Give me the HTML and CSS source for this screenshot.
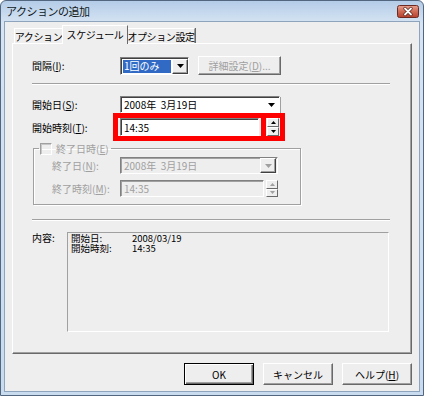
FILE: index.html
```html
<!DOCTYPE html>
<html lang="ja">
<head>
    <meta charset="UTF-8">
    <title>アクションの追加</title>
    <link rel="stylesheet" href="styles.css">
</head>
<body>
<div class="window">
    <div class="titlebar">
        <span class="title">アクションの追加</span>
        <span class="close">
            <svg width="22" height="13" viewBox="0 0 22 13">
                <defs>
                    <linearGradient id="cg" x1="0" y1="0" x2="0" y2="1">
                        <stop offset="0" stop-color="#e8a191"/>
                        <stop offset="0.5" stop-color="#cf6a55"/>
                        <stop offset="1" stop-color="#b5402c"/>
                    </linearGradient>
                </defs>
                <rect x="0.5" y="0.5" width="21" height="12" rx="2" fill="url(#cg)" stroke="#6e2a20"/>
                <path d="M8 3.5 L14 9.5 M14 3.5 L8 9.5" stroke="#5a2018" stroke-width="3.2" stroke-linecap="round"/>
                <path d="M8 3.5 L14 9.5 M14 3.5 L8 9.5" stroke="#fff" stroke-width="1.8" stroke-linecap="round"/>
            </svg>
        </span>
    </div>

    <div class="client">
        <div class="tabs">
            <span class="tab tab-action">アクション</span>
            <span class="tab tab-schedule active">スケジュール</span>
            <span class="tab tab-option">オプション設定</span>
        </div>

        <div class="panel">
            <div class="row row-interval">
                <span class="label">間隔(<u>I</u>):</span>
                <span class="select">
                    <span class="sel-text">1回のみ</span>
                    <span class="drop-btn">
                        <svg width="7" height="4" viewBox="0 0 7 4"><polygon points="0,0 7,0 3.5,4" fill="#000"/></svg>
                    </span>
                </span>
                <span class="btn btn-detail">詳細設定(<u>D</u>)...</span>
            </div>

            <div class="sep sep-top"></div>

            <div class="row row-start">
                <span class="label">開始日(<u>S</u>):</span>
                <span class="datepick">
                    <span class="dp-text">2008年&nbsp; 3月19日</span>
                    <span class="dp-arrow">
                        <svg width="7" height="4" viewBox="0 0 7 4"><polygon points="0,0 7,0 3.5,4" fill="#000"/></svg>
                    </span>
                </span>
            </div>

            <div class="row row-time">
                <span class="label">開始時刻(<u>T</u>):</span>
                <span class="timebox">14:35</span>
                <span class="spinner">
                    <span class="spin-btn">
                        <svg width="5" height="3" viewBox="0 0 5 3"><polygon points="0,3 5,3 2.5,0" fill="#000"/></svg>
                    </span>
                    <span class="spin-btn">
                        <svg width="5" height="3" viewBox="0 0 5 3"><polygon points="0,0 5,0 2.5,3" fill="#000"/></svg>
                    </span>
                </span>
                <span class="mark"><span class="mark-divider"></span></span>
            </div>

            <fieldset class="group">
                <legend class="group-legend">
                    <span class="checkbox"></span>
                    <span class="legend-text">終了日時(<u>E</u>)</span>
                </legend>
                <div class="row row-inner row-end-date">
                    <span class="label label-inner">終了日(<u>N</u>):</span>
                    <span class="datepick disabled">
                        <span class="dp-text">2008年&nbsp; 3月19日</span>
                        <span class="drop-btn">
                            <svg width="7" height="4" viewBox="0 0 7 4"><polygon points="0,0 7,0 3.5,4" fill="#a0a0a0"/></svg>
                        </span>
                    </span>
                </div>
                <div class="row row-inner row-end-time">
                    <span class="label label-inner">終了時刻(<u>M</u>):</span>
                    <span class="timebox disabled">14:35</span>
                    <span class="spinner spinner-off">
                        <span class="spin-btn">
                            <svg width="5" height="3" viewBox="0 0 5 3"><polygon points="0,3 5,3 2.5,0" fill="#a0a0a0"/></svg>
                        </span>
                        <span class="spin-btn">
                            <svg width="5" height="3" viewBox="0 0 5 3"><polygon points="0,0 5,0 2.5,3" fill="#a0a0a0"/></svg>
                        </span>
                    </span>
                </div>
            </fieldset>

            <div class="sep sep-bottom"></div>

            <div class="content-row">
                <span class="content-label">内容:</span>
                <div class="content-box">
                    <span class="c-key">開始日:</span><span class="c-val">2008/03/19</span>
                    <span class="c-key">開始時刻:</span><span class="c-val">14:35</span>
                </div>
            </div>
        </div>

        <div class="buttons">
            <span class="btn btn-main btn-default">OK</span>
            <span class="btn btn-main">キャンセル</span>
            <span class="btn btn-main">ヘルプ(<u>H</u>)</span>
        </div>
    </div>
</div>
</body>
</html>
```

FILE: styles.css
```css
* {
    box-sizing: border-box;
    margin: 0;
    padding: 0;
}

body {
    width: 424px;
    height: 396px;
    font-family: "Noto Sans CJK JP", sans-serif;
    font-size: 10px;
    color: #000;
    background: #ffffff;
    overflow: hidden;
}

u {
    text-decoration: underline;
    text-underline-offset: 1px;
}

.window {
    width: 424px;
    height: 396px;
    display: flex;
    flex-direction: column;
    padding: 0 3px 3px 3px;
    border: 1px solid #52677f;
    border-radius: 6px 6px 0 0;
    background: linear-gradient(#b4cce8, #d6e4f3 22px, #c8dbef);
}

/* title bar */
.titlebar {
    height: 20px;
    display: flex;
    align-items: center;
    justify-content: space-between;
    padding: 0 1px 0 2px;
}

.title {
    font-size: 11px;
    letter-spacing: -0.5px;
    color: #101820;
}

.close {
    display: flex;
    width: 22px;
    height: 13px;
}

/* client area */
.client {
    flex: 1;
    display: flex;
    flex-direction: column;
    background: #eeeeee;
    border: 1px solid #8ea3bc;
    padding: 3px 7px 0 7px;
}

/* tabs */
.tabs {
    height: 18px;
    display: flex;
    align-items: flex-end;
    padding-left: 2px;
}

.tab {
    height: 15px;
    display: flex;
    align-items: center;
    justify-content: center;
    white-space: nowrap;
    letter-spacing: -0.4px;
    border-top: 1px solid #ffffff;
    border-left: 1px solid #ffffff;
    border-right: 1px solid #a0a0a0;
    line-height: 13px;
}

.tab-action {
    width: 48px;
    border-right: none;
}

.tab-schedule {
    width: 66px;
}

.tab-option {
    width: 67px;
    border-left: none;
    box-shadow: 1px 0 0 #696969;
}

.tab.active {
    height: 19px;
    margin-bottom: -1px;
    background: #eeeeee;
    border-right: 1px solid #696969;
    position: relative;
    z-index: 1;
    padding-bottom: 2px;
}

/* tab panel */
.panel {
    height: 311px;
    border-top: 1px solid #ffffff;
    border-left: 1px solid #ffffff;
    border-right: 1px solid #696969;
    border-bottom: 1px solid #696969;
    box-shadow: inset -1px -1px 0 #a0a0a0;
    padding: 12px 21px 0 19px;
}

.row {
    display: flex;
    align-items: center;
}

.label {
    width: 88px;
    line-height: 13px;
    white-space: nowrap;
}

.row-interval {
    height: 19px;
}

.select {
    width: 69px;
    height: 18px;
    display: flex;
    background: #ffffff;
    border-top: 1px solid #808080;
    border-left: 1px solid #808080;
    border-right: 1px solid #ffffff;
    border-bottom: 1px solid #ffffff;
    box-shadow: inset 1px 1px 0 #404040;
    padding: 2px 1px 1px 2px;
}

.sel-text {
    flex: 1;
    background: #316ac5;
    color: #ffffff;
    line-height: 12px;
    padding-left: 1px;
    white-space: nowrap;
}

.drop-btn {
    width: 16px;
    display: flex;
    align-items: center;
    justify-content: center;
    background: #eeeeee;
    border-top: 1px solid #ffffff;
    border-left: 1px solid #ffffff;
    border-right: 1px solid #404040;
    border-bottom: 1px solid #404040;
    box-shadow: inset -1px -1px 0 #a0a0a0;
    margin: -1px -1px -1px 1px;
}

.btn {
    display: flex;
    align-items: center;
    justify-content: center;
    white-space: nowrap;
    background: #eeeeee;
    border-top: 1px solid #ffffff;
    border-left: 1px solid #ffffff;
    border-right: 1px solid #696969;
    border-bottom: 1px solid #696969;
    box-shadow: inset -1px -1px 0 #a0a0a0;
}

.btn-detail {
    width: 83px;
    height: 19px;
    margin-left: 9px;
    color: #a0a0a0;
}

.sep {
    height: 2px;
    border-top: 1px solid #a0a0a0;
    border-bottom: 1px solid #ffffff;
}

.sep-top {
    margin-top: 8px;
}

.row-start {
    height: 17px;
    margin-top: 11px;
}

.datepick {
    width: 160px;
    height: 17px;
    display: flex;
    align-items: center;
    background: #ffffff;
    border-top: 1px solid #808080;
    border-left: 1px solid #808080;
    border-right: 1px solid #ffffff;
    border-bottom: 1px solid #ffffff;
    box-shadow: inset 1px 1px 0 #404040, 1px 1px 0 #a0a0a0;
    padding-left: 3px;
}

.dp-text {
    flex: 1;
    line-height: 13px;
    white-space: nowrap;
}

.dp-arrow {
    width: 16px;
    display: flex;
    justify-content: center;
}

.row-time {
    height: 18px;
    margin-top: 5px;
    position: relative;
}

.timebox {
    width: 139px;
    height: 18px;
    display: flex;
    align-items: center;
    background: #ffffff;
    border-top: 1px solid #808080;
    border-left: 1px solid #808080;
    border-right: 1px solid #ffffff;
    border-bottom: 1px solid #ffffff;
    box-shadow: inset 1px 1px 0 #404040;
    padding-left: 3px;
}

.spinner {
    width: 12px;
    height: 18px;
    margin-left: 8px;
    display: flex;
    flex-direction: column;
}

.spin-btn {
    flex: 1;
    display: flex;
    align-items: center;
    justify-content: center;
    background: #eeeeee;
    border-top: 1px solid #ffffff;
    border-left: 1px solid #ffffff;
    border-right: 1px solid #696969;
    border-bottom: 1px solid #696969;
}

/* red highlight drawn over the time field */
.mark {
    position: absolute;
    left: 81px;
    top: -5px;
    width: 172px;
    height: 28px;
    border: 5px solid #ff0000;
}

.mark-divider {
    position: absolute;
    left: 143px;
    top: 0;
    width: 5px;
    height: 100%;
    background: #ff0000;
}

/* end date group */
.group {
    width: 268px;
    margin: 6px 0 0 1px;
    padding: 0 0 7px 0;
    border: 1px solid #a0a0a0;
    box-shadow: inset 1px 1px 0 #ffffff, 1px 1px 0 #ffffff;
}

.group-legend {
    display: flex;
    align-items: center;
    height: 13px;
    margin-left: 5px;
    padding: 0 2px 0 1px;
    color: #a0a0a0;
}

.checkbox {
    width: 12px;
    height: 12px;
    border-top: 1px solid #a0a0a0;
    border-left: 1px solid #a0a0a0;
    border-right: 1px solid #ffffff;
    border-bottom: 1px solid #ffffff;
    box-shadow: inset 1px 1px 0 #c8c8c8;
}

.legend-text {
    margin-left: 4px;
    line-height: 13px;
    white-space: nowrap;
}

.row-inner {
    height: 17px;
    padding-left: 18px;
}

.row-end-date {
    margin-top: 2px;
}

.row-end-time {
    margin-top: 6px;
}

.label-inner {
    width: 68px;
    color: #a0a0a0;
}

.datepick.disabled {
    width: 158px;
    background: #eeeeee;
    color: #a0a0a0;
    box-shadow: inset 1px 1px 0 #a0a0a0;
    padding-right: 1px;
}

.datepick.disabled .drop-btn {
    height: 15px;
    margin: 0;
}

.timebox.disabled {
    width: 144px;
    height: 17px;
    background: #eeeeee;
    color: #a0a0a0;
    box-shadow: inset 1px 1px 0 #a0a0a0;
}

.spinner-off {
    height: 17px;
    margin-left: 2px;
}

.sep-bottom {
    margin-top: 14px;
}

/* summary */
.content-row {
    display: flex;
    align-items: flex-start;
    margin-top: 11px;
}

.content-label {
    width: 35px;
    line-height: 11px;
}

.content-box {
    width: 322px;
    height: 100px;
    display: grid;
    grid-template-columns: 61px 1fr;
    grid-auto-rows: 10px;
    align-content: start;
    border-top: 1px solid #a0a0a0;
    border-left: 1px solid #a0a0a0;
    border-right: 1px solid #ffffff;
    border-bottom: 1px solid #ffffff;
    padding: 0 3px;
    font-size: 9.5px;
    line-height: 10px;
}

.c-key,
.c-val {
    height: 10px;
    white-space: nowrap;
}

/* dialog buttons */
.buttons {
    display: flex;
    justify-content: flex-end;
    gap: 9px;
    margin-top: 9px;
}

.btn-main {
    width: 70px;
    height: 22px;
}

.btn-default {
    border: 1px solid #000000;
    box-shadow: inset 1px 1px 0 #ffffff, inset -1px -1px 0 #696969, inset -2px -2px 0 #a0a0a0;
}
```
